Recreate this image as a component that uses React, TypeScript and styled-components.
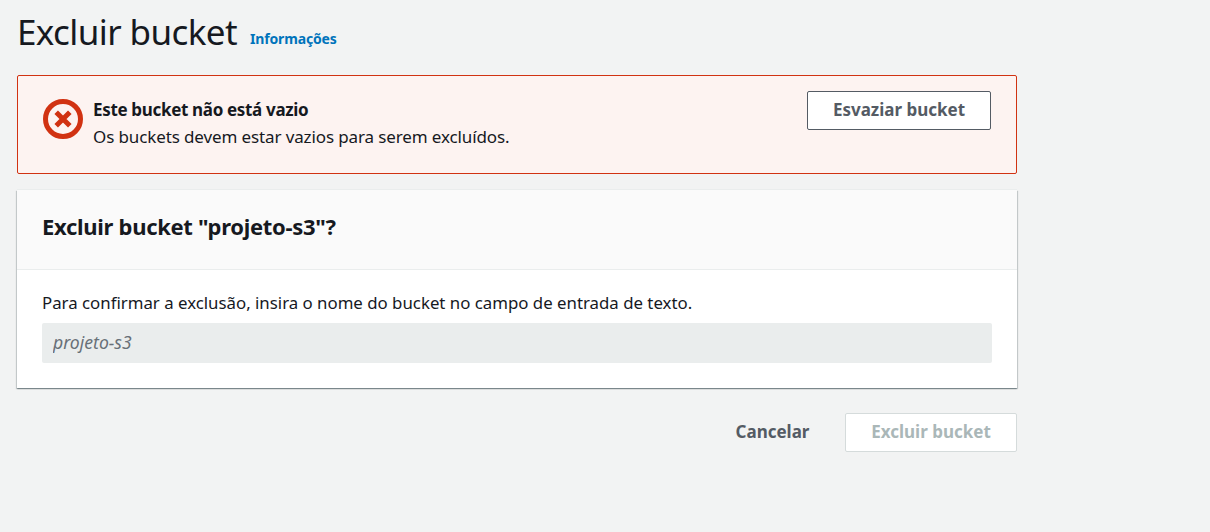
import React from 'react';
import styled, { createGlobalStyle } from 'styled-components';

const GlobalStyle = createGlobalStyle`
  * { box-sizing: border-box; }
  body { margin: 0; background: #f2f3f3; color: #16191f; font-family: "Noto Sans", sans-serif; font-size: 17px; }
  h1, h2, p { margin: 0; }
`;

const Page = styled.main`
  width: 1034px;
  height: 532px;
  padding: 9px 17px 0;
`;

const Header = styled.header`
  display: flex;
  align-items: flex-start;
  gap: 13px;
  height: 66px;
`;

const Title = styled.h1`
  font-size: 35px;
  line-height: 46px;
  font-weight: 400;
  letter-spacing: -0.6px;
  white-space: nowrap;
`;

const InfoLink = styled.a`
  padding-top: 19px;
  color: #0073bb;
  font-size: 14px;
  font-weight: 700;
  line-height: 22px;
  letter-spacing: -0.15px;
`;

const Alert = styled.section`
  display: flex;
  height: 99px;
  padding: 15px 25px;
  border: 1px solid #d13212;
  border-radius: 2px;
  background: #fdf3f1;
`;

const AlertIcon = styled.svg`
  width: 40px;
  height: 40px;
  margin-top: 8px;
  flex: none;
`;

const AlertText = styled.div`
  flex: 1;
  padding: 5px 0 0 10px;
  line-height: 27px;
  white-space: nowrap;
`;

const AlertTitle = styled.p`
  font-weight: 700;
  letter-spacing: -0.33px;
`;

const AlertMessage = styled.p`
  letter-spacing: -0.12px;
`;

const Button = styled.button<{ $width: number; $tone?: 'link' | 'disabled' }>`
  width: ${(p) => p.$width}px;
  height: 39px;
  padding: 0 0 2px;
  border: 1px solid ${(p) => (p.$tone === 'link' ? 'transparent' : p.$tone === 'disabled' ? '#d5dbdb' : '#545b64')};
  border-radius: 2px;
  background: ${(p) => (p.$tone === 'link' ? 'transparent' : '#fff')};
  color: ${(p) => (p.$tone === 'disabled' ? '#aab7b8' : '#545b64')};
  font: 700 17px/35px "Noto Sans", sans-serif;
  white-space: nowrap;
`;

const Card = styled.section`
  height: 198px;
  margin-top: 16px;
  background: #fff;
  box-shadow: 0 -1px 0 #eaeded, 0 1px 1px rgba(0, 28, 36, 0.3), 1px 1px 1px rgba(0, 28, 36, 0.15), -1px 1px 1px rgba(0, 28, 36, 0.15);
`;

const CardHeader = styled.div`
  height: 80px;
  padding: 19px 25px;
  border-bottom: 1px solid #eaeded;
  background: #fafafa;
`;

const CardTitle = styled.h2`
  font-weight: 700;
  font-size: 22px;
  line-height: 34px;
  letter-spacing: -0.3px;
`;

const CardBody = styled.div`
  padding: 19px 25px;
`;

const Label = styled.label`
  display: block;
  height: 34px;
  font-size: 16.82px;
  line-height: 28px;
  white-space: nowrap;
`;

const Input = styled.input`
  display: block;
  width: 100%;
  height: 40px;
  padding: 0 11px 2px;
  border: 0;
  border-radius: 2px;
  background: #eaeded;
  font: italic 17.6px "Noto Sans", sans-serif;
  &::placeholder { color: #687078; opacity: 1; }
`;

const Footer = styled.footer`
  display: flex;
  justify-content: flex-end;
  gap: 9px;
  margin-top: 25px;
`;

export default function App() {
  return (
    <>
      <GlobalStyle />
      <Page>
        <Header>
          <Title>Excluir bucket</Title>
          <InfoLink>Informações</InfoLink>
        </Header>
        <Alert>
          <AlertIcon viewBox="0 0 40 40" fill="none" stroke="#d13212" strokeWidth="5">
            <circle cx="20" cy="20" r="17.5" />
            <path d="M13.2 13.2l13.6 13.6M26.8 13.2L13.2 26.8" />
          </AlertIcon>
          <AlertText>
            <AlertTitle>Este bucket não está vazio</AlertTitle>
            <AlertMessage>Os buckets devem estar vazios para serem excluídos.</AlertMessage>
          </AlertText>
          <Button $width={184}>Esvaziar bucket</Button>
        </Alert>
        <Card>
          <CardHeader>
            <CardTitle>Excluir bucket "projeto-s3"?</CardTitle>
          </CardHeader>
          <CardBody>
            <Label htmlFor="name">Para confirmar a exclusão, insira o nome do bucket no campo de entrada de texto.</Label>
            <Input id="name" placeholder="projeto-s3" />
          </CardBody>
        </Card>
        <Footer>
          <Button $width={127} $tone="link">Cancelar</Button>
          <Button $width={172} $tone="disabled" disabled>Excluir bucket</Button>
        </Footer>
      </Page>
    </>
  );
}
